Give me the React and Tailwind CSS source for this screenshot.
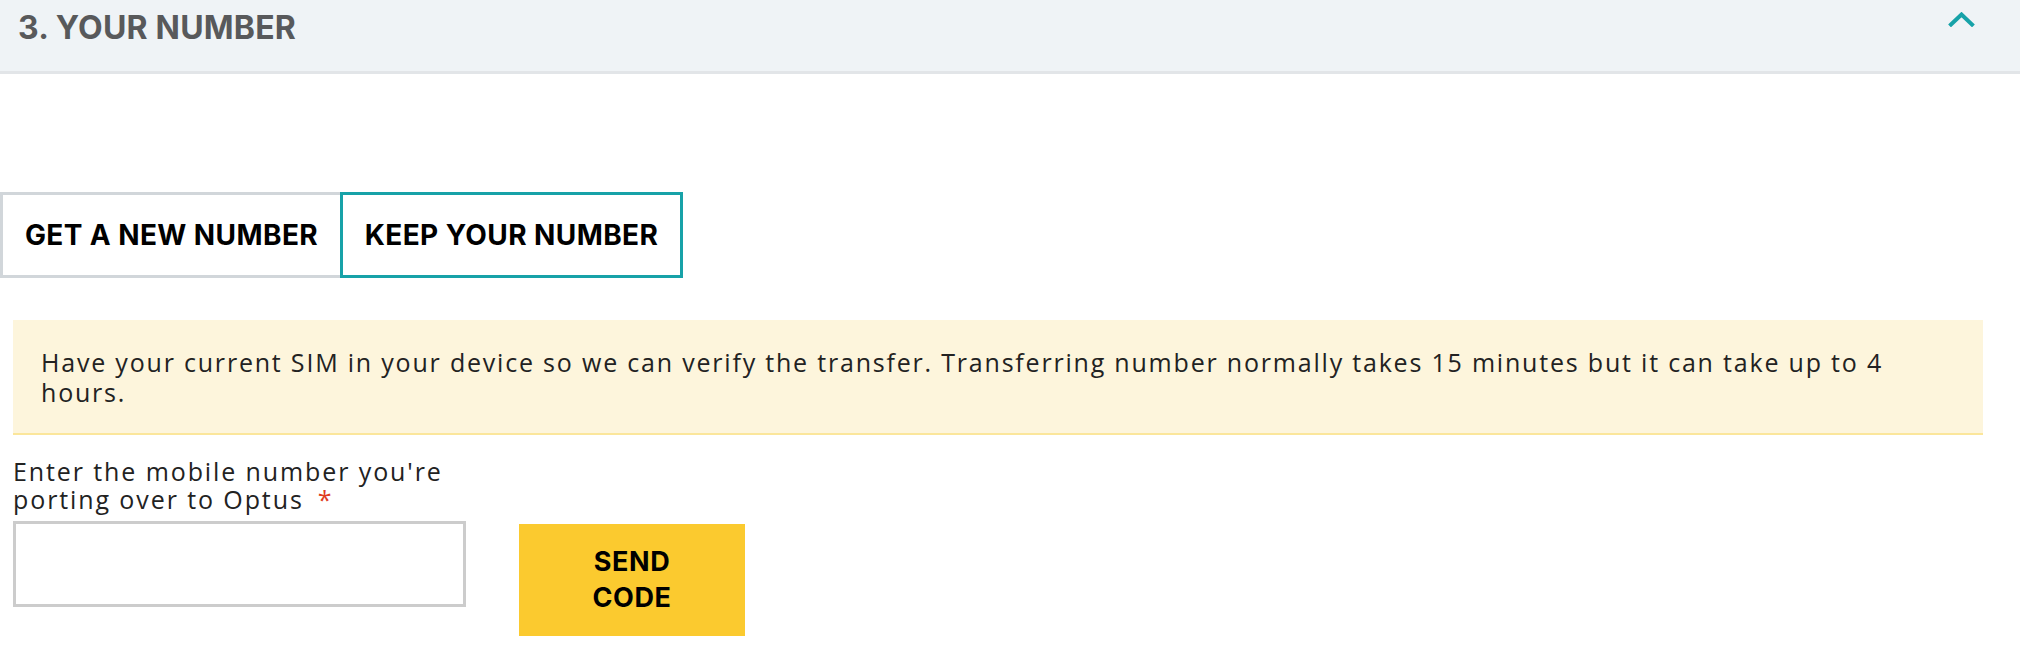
import React, { useState } from 'react';

const ChevronUp = ({ className = "w-[27px] h-[15px]" }) => (
  <svg className={className} viewBox="0 0 27 15" fill="none" stroke="currentColor" strokeWidth="4" strokeLinecap="square">
    <path d="M3 12.5 13.5 2.5 24 12.5" />
  </svg>
);

const App = () => {
  const [mode, setMode] = useState('keep');
  const [number, setNumber] = useState('');

  const tabBase =
    "h-[86px] flex items-center justify-center text-[28px] tracking-[0.4px] font-bold text-black bg-white uppercase";

  return (
    <div className="w-[2020px] min-h-[650px] bg-white font-['Open_Sans',sans-serif]">
      {/* Section header */}
      <div className="h-[74px] bg-[#eff3f6] border-b-[3px] border-[#e2e5e8] flex items-start justify-between pl-[18px] pr-[45px]">
        <h2 className="pt-[8px] text-[32px] leading-[40px] font-bold text-[#58595b] font-['Inter',sans-serif] tracking-[0.2px]">
          3. YOUR NUMBER
        </h2>
        <button className="mt-[12px] text-[#17a2a8]">
          <ChevronUp />
        </button>
      </div>

      {/* Number choice tabs */}
      <div className="flex mt-[118px] font-['Inter',sans-serif]">
        <button
          onClick={() => setMode('new')}
          className={`${tabBase} w-[340px] border-[3px] border-r-0 ${mode === 'new' ? 'border-[#17a2a8]' : 'border-[#d1d6da]'}`}
        >
          GET A NEW NUMBER
        </button>
        <button
          onClick={() => setMode('keep')}
          className={`${tabBase} w-[343px] border-[3px] ${mode === 'keep' ? 'border-[#17a2a8]' : 'border-[#d1d6da]'}`}
        >
          KEEP YOUR NUMBER
        </button>
      </div>

      <div className="pl-[13px] pr-[37px]">
        {/* Info notice */}
        <div className="mt-[42px] bg-[#fdf5dc] border-b-2 border-[#fbe69b] pl-[28px] pr-[70px] pt-[27px] pb-[26px]">
          <p className="text-[25px] leading-[30px] tracking-[1.8px] text-[#222]">
            Have your current SIM in your device so we can verify the transfer. Transferring number normally takes 15 minutes but it can take up to 4 hours.
          </p>
        </div>

        {/* Mobile number field */}
        <div className="mt-[22px]">
          <label className="block w-[460px] text-[25px] leading-[28px] tracking-[1.9px] text-[#222]">
            Enter the mobile number you're porting over to Optus<span className="text-[#e03c1f] ml-[14px]">*</span>
          </label>
          <div className="flex items-start mt-[8px]">
            <input
              type="tel"
              value={number}
              onChange={(e) => setNumber(e.target.value)}
              className="w-[453px] h-[86px] border-[3px] border-[#cccccc] bg-white px-4 text-[24px] outline-none"
            />
            <button className="ml-[53px] mt-[3px] w-[226px] h-[112px] bg-[#fbca2f] text-[27px] leading-[36px] tracking-[0.6px] font-bold text-black font-['Inter',sans-serif]">
              SEND<br />CODE
            </button>
          </div>
        </div>
      </div>
    </div>
  );
};

export default App;
